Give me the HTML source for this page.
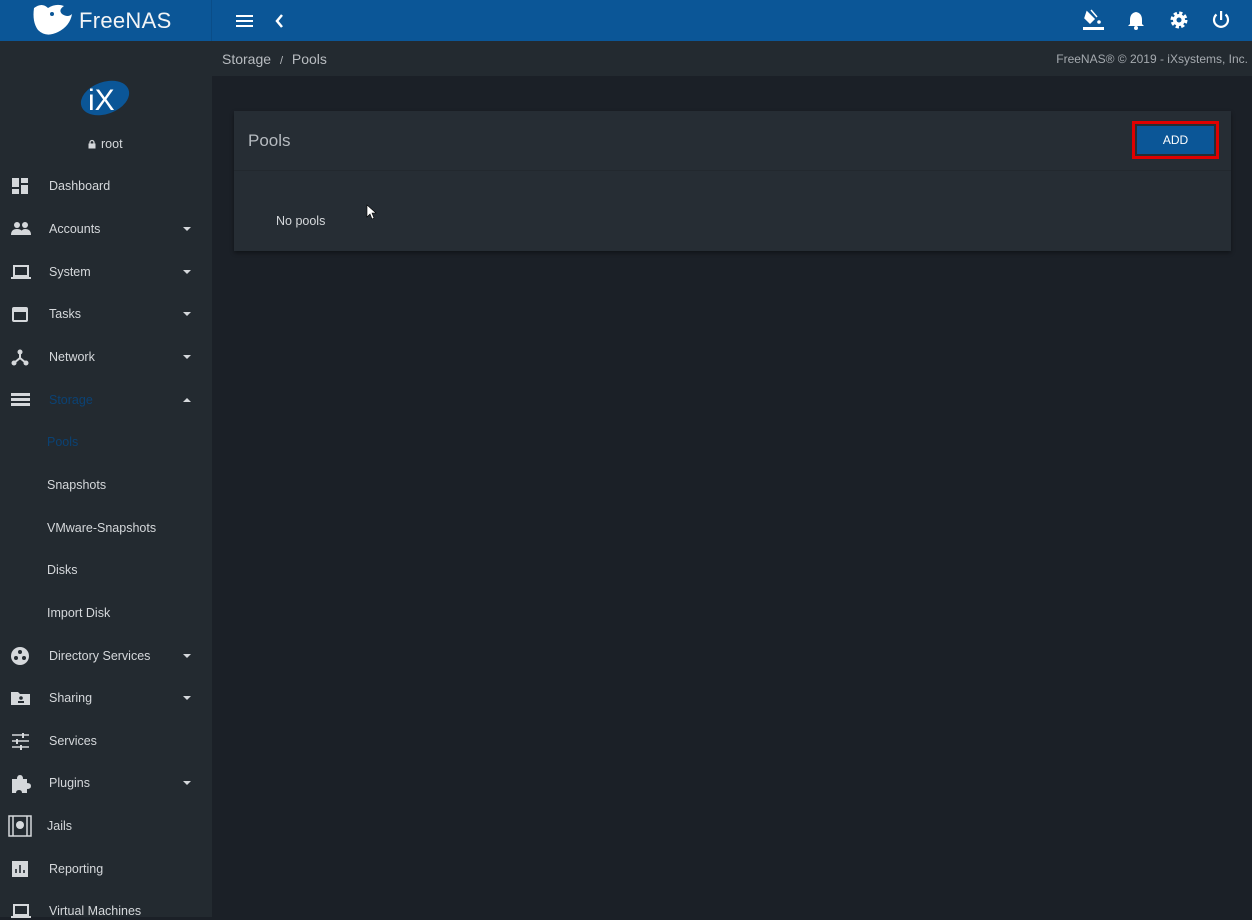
<!DOCTYPE html>
<html><head><meta charset="utf-8"><style>
*{margin:0;padding:0;box-sizing:border-box}
body{width:1252px;height:917px;overflow:hidden;background:#1b2027;font-family:"Liberation Sans",sans-serif;position:relative}
.top{position:absolute;left:0;top:0;width:1252px;height:41px;background:#0b5697}
.logo{position:absolute;left:0;top:0;width:212px;height:41px;border-right:1px solid #0a4d88}
.side{position:absolute;left:0;top:41px;width:212px;height:876px;background:#232a30}
.bc{position:absolute;left:212px;top:41px;width:1040px;height:35px;background:#232a30}
.item{position:absolute;left:0;width:212px;height:20px;color:#d5d8db;font-size:12.5px}
.item .t{position:absolute;left:49px;top:4px}
.item .sub{left:47px}
.item svg.i{position:absolute;left:11px;top:2px}
.caret{position:absolute;left:183px;top:9px;width:0;height:0;border-left:4px solid transparent;border-right:4px solid transparent;border-top:4px solid #d5d8db}
.card{position:absolute;left:234px;top:111px;width:997px;height:140px;background:#262d34;box-shadow:0 2px 4px rgba(0,0,0,.4)}
.card .hdr{height:60px;border-bottom:1px solid #22282e}
</style></head><body>
<div class="top">
 <div class="logo">
  <svg width="50" height="41" style="position:absolute;left:28px;top:0"><path d="M6 8 Q14 2 20 8 Q28 3 36 6 Q30 10 34 14 Q40 18 44 14 Q42 26 30 32 Q18 38 10 30 Q4 22 6 8Z" fill="#fff"/><circle cx="24" cy="14" r="2" fill="#0b5697"/></svg>
  <div style="position:absolute;left:79px;top:8px;color:#f2f4f6;font-size:22px;letter-spacing:0.3px">FreeNAS</div>
 </div>
 <svg width="20" height="20" style="position:absolute;left:235px;top:11px"><rect x="1" y="4" width="17" height="2" fill="#fff"/><rect x="1" y="9" width="17" height="2" fill="#fff"/><rect x="1" y="14" width="17" height="2" fill="#fff"/></svg>
 <svg width="12" height="20" style="position:absolute;left:274px;top:11px"><path d="M8 4 L3 10 L8 16" stroke="#fff" stroke-width="2.5" fill="none"/></svg>
 <svg width="24" height="24" style="position:absolute;left:1082px;top:8px"><path d="M5 4 L12 11 L8 15 L3 10Z M9 2 L15 9" fill="#fff" stroke="#fff" stroke-width="1.5"/><circle cx="17" cy="14" r="1.8" fill="#fff"/><rect x="1" y="19" width="21" height="3" fill="#fff"/></svg>
 <svg width="20" height="22" style="position:absolute;left:1126px;top:10px"><path d="M10 2 Q16 3 16 10 L16 14 L18 16 L2 16 L4 14 L4 10 Q4 3 10 2Z" fill="#fff"/><circle cx="10" cy="18" r="2" fill="#fff"/></svg>
 <svg width="22" height="22" style="position:absolute;left:1168px;top:9px"><circle cx="11" cy="11" r="6.5" fill="none" stroke="#fff" stroke-width="4" stroke-dasharray="3 2.1"/><circle cx="11" cy="11" r="6" fill="#fff"/><circle cx="11" cy="11" r="2.5" fill="#0b5697"/></svg>
 <svg width="22" height="22" style="position:absolute;left:1210px;top:9px"><path d="M6.5 5.5 A7 7 0 1 0 15.5 5.5" stroke="#fff" stroke-width="2.2" fill="none"/><rect x="10" y="2" width="2.2" height="9" fill="#fff"/></svg>
</div>
<div class="side">
 <svg width="54" height="40" style="position:absolute;left:79px;top:36px"><ellipse cx="26" cy="21" rx="25" ry="16" transform="rotate(-20 26 21)" fill="#0b5697"/><text x="9" y="33" fill="#fff" font-family="Liberation Sans" font-size="30">iX</text></svg>
 <div style="position:absolute;left:88px;top:96px;color:#d5d8db;font-size:12.5px"><svg width="8" height="10" style="margin-right:5px;vertical-align:-1px"><path d="M2 5V3.5A2 2 0 0 1 6 3.5V5" stroke="#d5d8db" stroke-width="1.3" fill="none"/><rect x="0.5" y="4.5" width="7" height="5" fill="#d5d8db"/></svg>root</div>
</div>
<div class="bc">
 <div style="position:absolute;left:10px;top:10px;color:#b8bcc0;font-size:14px">Storage <span style="font-size:11px;margin:0 5px">/</span> Pools</div>
 <div style="position:absolute;right:4px;top:11px;color:#a5aaaf;font-size:12px">FreeNAS® © 2019 - iXsystems, Inc.</div>
</div>

<div class="item" style="top:175px"><svg class="i" width="18" height="18"><rect x="1" y="1" width="7" height="9" fill="#d5d8db"/><rect x="10" y="1" width="7" height="5" fill="#d5d8db"/><rect x="1" y="12" width="7" height="5" fill="#d5d8db"/><rect x="10" y="8" width="7" height="9" fill="#d5d8db"/></svg><span class="t">Dashboard</span></div>
<div class="item" style="top:218px"><svg class="i" width="20" height="18"><circle cx="6" cy="5" r="3" fill="#d5d8db"/><circle cx="14" cy="5" r="3" fill="#d5d8db"/><path d="M0 15 Q0 9 6 9 Q12 9 12 15Z M9 15 Q10 9 14 9 Q20 9 20 15Z" fill="#d5d8db"/></svg><span class="t">Accounts</span><i class="caret"></i></div>
<div class="item" style="top:261px"><svg class="i" width="20" height="18"><rect x="3" y="3" width="14" height="10" fill="none" stroke="#d5d8db" stroke-width="2"/><rect x="0" y="14" width="20" height="2" fill="#d5d8db"/></svg><span class="t">System</span><i class="caret"></i></div>
<div class="item" style="top:303px"><svg class="i" width="18" height="18"><rect x="2" y="3" width="14" height="13" rx="1" fill="none" stroke="#d5d8db" stroke-width="2"/><rect x="2" y="3" width="14" height="4" fill="#d5d8db"/></svg><span class="t">Tasks</span><i class="caret"></i></div>
<div class="item" style="top:346px"><svg class="i" width="18" height="18"><circle cx="9" cy="4" r="2.5" fill="#d5d8db"/><circle cx="3" cy="15" r="2.5" fill="#d5d8db"/><circle cx="15" cy="15" r="2.5" fill="#d5d8db"/><path d="M9 4 V10 L3 15 M9 10 L15 15" stroke="#d5d8db" stroke-width="2" fill="none"/></svg><span class="t">Network</span><i class="caret"></i></div>
<div class="item" style="top:389px;color:#0b4274"><svg class="i" width="20" height="18"><rect x="0" y="2" width="19" height="3" fill="#d5d8db"/><rect x="0" y="7" width="19" height="3" fill="#d5d8db"/><rect x="0" y="12" width="19" height="3" fill="#d5d8db"/></svg><span class="t">Storage</span><i class="caret" style="border-top:0;border-bottom:4px solid #d5d8db"></i></div>
<div class="item" style="top:431px;color:#0b4274"><span class="t sub">Pools</span></div>
<div class="item" style="top:474px"><span class="t sub">Snapshots</span></div>
<div class="item" style="top:517px"><span class="t sub">VMware-Snapshots</span></div>
<div class="item" style="top:559px"><span class="t sub">Disks</span></div>
<div class="item" style="top:602px"><span class="t sub">Import Disk</span></div>
<div class="item" style="top:645px"><svg class="i" width="20" height="20"><circle cx="9" cy="9" r="9" fill="#d5d8db"/><circle cx="9" cy="5" r="2" fill="#232a30"/><circle cx="5" cy="11" r="2" fill="#232a30"/><circle cx="13" cy="11" r="2" fill="#232a30"/></svg><span class="t">Directory Services</span><i class="caret"></i></div>
<div class="item" style="top:687px"><svg class="i" width="20" height="18"><path d="M0 3 H7 L9 5 H19 V16 H0Z" fill="#d5d8db"/><circle cx="10" cy="9" r="1.8" fill="#232a30"/><rect x="7" y="12" width="6" height="2" fill="#232a30"/></svg><span class="t">Sharing</span><i class="caret"></i></div>
<div class="item" style="top:730px"><svg class="i" width="20" height="18"><path d="M1 3H18M1 9H18M1 15H18" stroke="#d5d8db" stroke-width="1.6"/><rect x="11" y="1" width="2" height="5" fill="#d5d8db"/><rect x="5" y="7" width="2" height="5" fill="#d5d8db"/><rect x="9" y="13" width="2" height="5" fill="#d5d8db"/></svg><span class="t">Services</span></div>
<div class="item" style="top:772px"><svg class="i" width="20" height="20"><path d="M1 5 H6 Q6 1 9 1 Q12 1 12 5 H16 V9 Q20 9 20 12 Q20 15 16 15 V19 H11 Q11 16 8 16 Q5 16 5 19 H1Z" fill="#d5d8db"/></svg><span class="t">Plugins</span><i class="caret"></i></div>
<div class="item" style="top:815px"><svg class="i" width="24" height="22" style="left:8px;top:0"><rect x="1" y="1" width="22" height="20" fill="none" stroke="#d5d8db" stroke-width="1.5"/><path d="M5 1V21M19 1V21" stroke="#d5d8db" stroke-width="1.5"/><circle cx="12" cy="10" r="4" fill="#d5d8db"/></svg><span class="t" style="left:47px">Jails</span></div>
<div class="item" style="top:858px"><svg class="i" width="18" height="18"><rect x="1" y="1" width="16" height="16" fill="#d5d8db"/><path d="M5 13V9M9 13V5M13 13V10" stroke="#232a30" stroke-width="1.6"/></svg><span class="t">Reporting</span></div>
<div class="item" style="top:900px"><svg class="i" width="20" height="18"><rect x="3" y="3" width="14" height="10" fill="none" stroke="#d5d8db" stroke-width="2"/><rect x="0" y="14" width="20" height="2" fill="#d5d8db"/></svg><span class="t">Virtual Machines</span></div>

<div class="card">
 <div class="hdr"><div style="position:absolute;left:14px;top:20px;color:#b6bbc0;font-size:17px">Pools</div></div>
 <div style="position:absolute;left:42px;top:103px;color:#d5d8db;font-size:12.5px">No pools</div>
 <div style="position:absolute;left:898px;top:10px;width:87px;height:38px;border:3px solid #e00000;padding:2px"><div style="width:100%;height:100%;background:#0b5697;color:#fff;font-size:12px;text-align:center;line-height:28px">ADD</div></div>
</div>
<svg width="12" height="16" style="position:absolute;left:366px;top:204px"><path d="M1 1 V13 L4 10 L6 15 L8 14 L6 9 L10 9Z" fill="#fff" stroke="#000" stroke-width="0.6"/></svg>
</body></html>
